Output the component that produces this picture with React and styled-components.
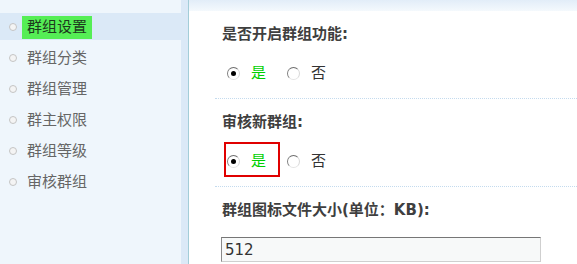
import React, { useState } from "react"
import styled, { createGlobalStyle } from "styled-components"

const Global = createGlobalStyle`
  html, body { margin: 0; padding: 0; background: #fff; }
  body {
    font-family: "DejaVu Sans", "Noto Sans CJK SC", sans-serif;
    font-size: 15px;
  }
`;

const Page = styled.div`
  display: flex;
  height: 100vh;
  overflow: hidden;
`;

const Sidebar = styled.div`
  width: 188px;
  flex: none;
  background: #dbe9f7;
  border-right: 1px solid #a3cdd8;
`;

const Menu = styled.ul`
  width: 181px;
  height: 100%;
  margin: 0;
  padding: 13px 0 0;
  list-style: none;
  background: #eff6fc;
  box-sizing: border-box;
`;

const MenuItem = styled.li`
  display: flex;
  align-items: center;
  height: 27px;
  margin-bottom: 4px;
  padding-left: 9px;
  background: ${p => (p.$active ? "#dbe9f7" : "transparent")};
  cursor: pointer;
`;

const Bullet = styled.span`
  width: 6px;
  height: 6px;
  border-radius: 50%;
  border: 1px solid #c4c4c4;
  background: #f4f4f4;
  margin-right: 5px;
  flex: none;
`;

const MenuText = styled.span`
  padding: 0 5px;
  line-height: 23px;
  margin-top: 2px;
  color: ${p => (p.$active ? "#1d3a1d" : "#666")};
  background: ${p => (p.$active ? "#55ee55" : "transparent")};
`;

const Content = styled.div`
  flex: 1;
  background: #fff;
`;

const TopBand = styled.div`
  height: 11px;
  background: linear-gradient(#e2edf8, #f4f9fd);
`;

const Block = styled.div`
  margin-left: 26px;
  padding: 14px 0 15px 7px;
  border-bottom: ${p => (p.$last ? "none" : "1px dotted #c4dbee")};
`;

const Label = styled.div`
  font-weight: bold;
  line-height: 18px;
  color: #3f3f3f;
`;

const RadioRow = styled.div`
  display: flex;
  align-items: center;
  height: 20px;
  margin-top: 20px;
  padding-left: 5px;
`;

const Option = styled.label`
  position: relative;
  display: flex;
  align-items: center;
  margin-right: 21px;
  cursor: pointer;

  ${p =>
    p.$marked &&
    `
    &::after {
      content: "";
      position: absolute;
      top: -9px;
      bottom: -6px;
      left: -3px;
      right: -14px;
      border: 2px solid #e00000;
      pointer-events: none;
    }
  `}
`;

const Radio = styled.input.attrs({ type: "radio" })`
  appearance: none;
  width: 13px;
  height: 13px;
  margin: 0 11px 0 0;
  border-radius: 50%;
  border: 1px solid;
  border-color: #6e6e6e #d8d8d8 #e4e4e4 #808080;
  background: #fff;
  box-sizing: border-box;
  display: grid;
  place-items: center;

  &:checked::before {
    content: "";
    width: 5px;
    height: 5px;
    border-radius: 50%;
    background: #000;
  }
`;

const OptionText = styled.span`
  line-height: 20px;
  color: ${p => (p.$yes ? "#00d000" : "#333")};
`;

const TextInput = styled.input`
  display: block;
  width: 320px;
  height: 25px;
  margin: 18px 0 0 -1px;
  padding: 0 3px;
  box-sizing: border-box;
  border: 1px solid;
  border-color: #767676 #cfcfcf #cfcfcf #8a8a8a;
  background: #f7f9f9;
  font-family: "DejaVu Sans", sans-serif;
  font-size: 15px;
  color: #333;
  outline: none;
`;

const menu = ["群组设置", "群组分类", "群组管理", "群主权限", "群组等级", "审核群组"];

function YesNo({ name, value, onChange, marked }) {
  return (
    <RadioRow>
      <Option $marked={marked}>
        <Radio name={name} checked={value} onChange={() => onChange(true)} />
        <OptionText $yes>是</OptionText>
      </Option>
      <Option>
        <Radio name={name} checked={!value} onChange={() => onChange(false)} />
        <OptionText>否</OptionText>
      </Option>
    </RadioRow>
  );
}

export default function App() {
  const [active, setActive] = useState(0);
  const [open, setOpen] = useState(true);
  const [audit, setAudit] = useState(true);
  const [size, setSize] = useState("512");

  return (
    <>
      <Global />
      <Page>
        <Sidebar>
          <Menu>
            {menu.map((item, i) => (
              <MenuItem key={item} $active={i === active} onClick={() => setActive(i)}>
                <Bullet />
                <MenuText $active={i === active}>{item}</MenuText>
              </MenuItem>
            ))}
          </Menu>
        </Sidebar>
        <Content>
          <TopBand />
          <Block>
            <Label>是否开启群组功能:</Label>
            <YesNo name="open" value={open} onChange={setOpen} />
          </Block>
          <Block>
            <Label>审核新群组:</Label>
            <YesNo name="audit" value={audit} onChange={setAudit} marked />
          </Block>
          <Block $last>
            <Label>群组图标文件大小(单位：KB):</Label>
            <TextInput value={size} onChange={e => setSize(e.target.value)} />
          </Block>
        </Content>
      </Page>
    </>
  );
}
